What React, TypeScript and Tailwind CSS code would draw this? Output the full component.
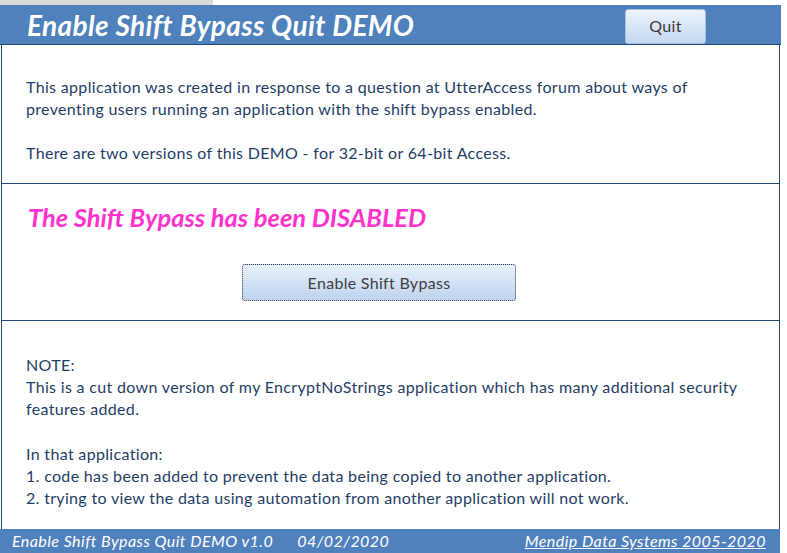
import React from "react";

export default function App() {
  return (
    <div className="relative w-[787px] h-[553px] bg-white overflow-hidden font-['Lato',sans-serif]">
      <div className="flex h-[5px]">
        <div className="w-[213px] bg-[#dadada]" />
      </div>
      <div className="w-[781px] flex flex-col">
        <header className="h-[40px] bg-[#4f81bd] border-b border-[#1f497d] flex items-center justify-between pl-[27px] pr-[75px]">
          <h1 className="text-white font-bold italic text-[28px] leading-none tracking-[0.35px]">Enable Shift Bypass Quit DEMO</h1>
          <button className="w-[81px] h-[35px] mt-[3px] rounded-[3px] border border-[#a8c0e2] bg-gradient-to-b from-[#eef3fb] to-[#c4d8f1] text-[#3a3a3a] text-[16px] tracking-[0.3px]">
            Quit
          </button>
        </header>
        <main className="ml-[1px] w-[779px] h-[484px] border-l border-r border-[#1f497d] flex flex-col text-[#1f3e66] text-[16px] tracking-[0.33px] leading-[22px]">
          <section className="h-[139px] border-b border-[#1f497d] pt-[31px] pl-[24px]">
            <p>This application was created in response to a question at UtterAccess forum about ways of</p>
            <p>preventing users running an application with the shift bypass enabled.</p>
            <p className="mt-[22px]">There are two versions of this DEMO - for 32-bit or 64-bit Access.</p>
          </section>
          <section className="h-[137px] border-b border-[#1f497d] pt-[17px] pl-[26px] flex flex-col">
            <p className="text-[#ff33cc] font-bold italic text-[25.5px] tracking-normal leading-[32px]">The Shift Bypass has been DISABLED</p>
            <div className="mt-[31px] pl-[214px]">
              <button className="w-[274px] h-[37px] rounded-[3px] border border-dotted border-[#2b3a55] bg-gradient-to-b from-[#e9f0fa] to-[#bed3ef] text-[#404040] text-[16px] tracking-[0.3px]">
                Enable Shift Bypass
              </button>
            </div>
          </section>
          <section className="flex-1 pt-[33px] pl-[24px]">
            <p>NOTE:</p>
            <p>This is a cut down version of my EncryptNoStrings application which has many additional security</p>
            <p>features added.</p>
            <p className="mt-[23px]">In that application:</p>
            <p>1. code has been added to prevent the data being copied to another application.</p>
            <p>2. trying to view the data using automation from another application will not work.</p>
          </section>
        </main>
        <footer className="h-[24px] w-[780px] bg-[#4f81bd] flex items-center text-white italic text-[16px] tracking-[0.45px] pl-[12px] pr-[14px]">
          <span>Enable Shift Bypass Quit DEMO v1.0</span>
          <span className="ml-[24px]">04/02/2020</span>
          <span className="ml-auto underline">Mendip Data Systems 2005-2020</span>
        </footer>
      </div>
    </div>
  );
}
